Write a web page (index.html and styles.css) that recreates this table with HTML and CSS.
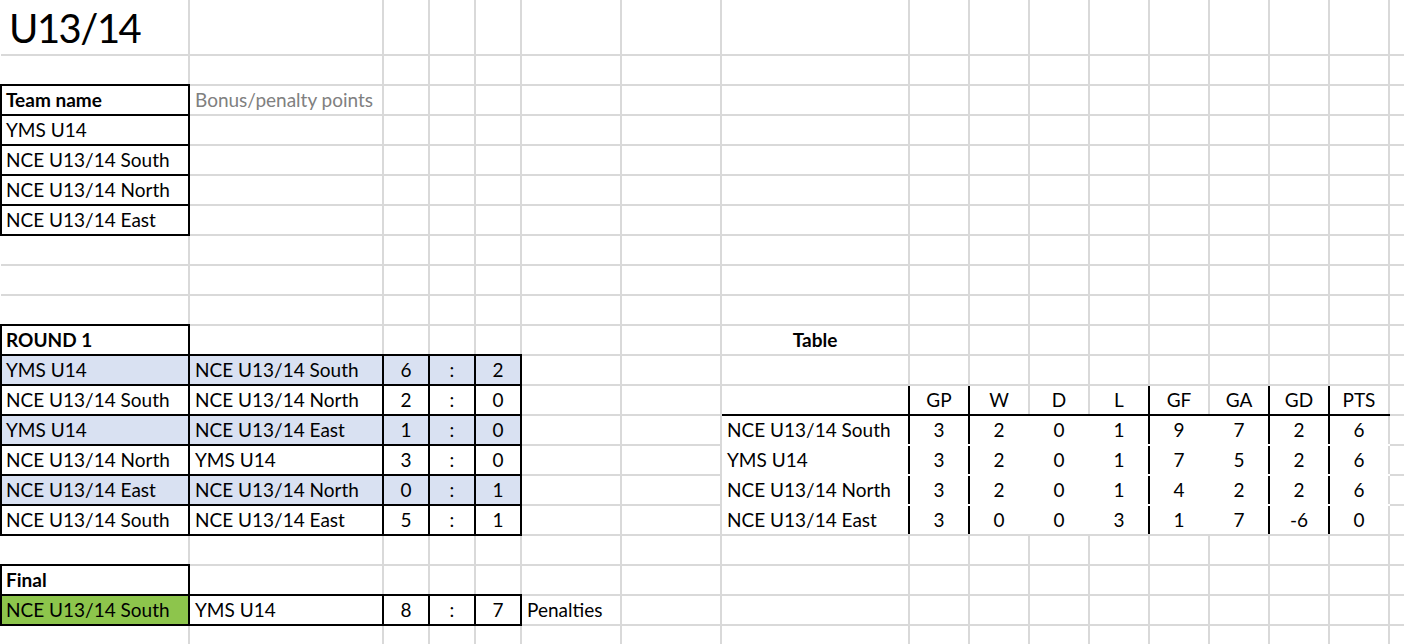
FILE: index.html
```html
<!DOCTYPE html>
<html lang="en">
<head>
<meta charset="utf-8">
<title>U13/14</title>
<link rel="stylesheet" href="styles.css">
</head>
<body>
<table class="sheet">
<colgroup>
<col class="w-a"><col class="w-b"><col class="w-s"><col class="w-s"><col class="w-s"><col class="w-f"><col class="w-f"><col class="w-h">
<col class="w-n"><col class="w-n"><col class="w-n"><col class="w-n"><col class="w-n"><col class="w-n"><col class="w-n"><col class="w-n"><col class="w-n">
</colgroup>
<tbody>
<tr class="row-title"><td class="title">U13/14</td><td></td><td></td><td></td><td></td><td></td><td></td><td></td><td></td><td></td><td></td><td></td><td></td><td></td><td></td><td></td><td></td></tr>
<tr><td class="b"></td><td></td><td></td><td></td><td></td><td></td><td></td><td></td><td></td><td></td><td></td><td></td><td></td><td></td><td></td><td></td><td></td></tr>
<tr><td class="l r b bold">Team name</td><td class="muted">Bonus/penalty points</td><td></td><td></td><td></td><td></td><td></td><td></td><td></td><td></td><td></td><td></td><td></td><td></td><td></td><td></td><td></td></tr>
<tr><td class="l r b">YMS U14</td><td></td><td></td><td></td><td></td><td></td><td></td><td></td><td></td><td></td><td></td><td></td><td></td><td></td><td></td><td></td><td></td></tr>
<tr><td class="l r b">NCE U13/14 South</td><td></td><td></td><td></td><td></td><td></td><td></td><td></td><td></td><td></td><td></td><td></td><td></td><td></td><td></td><td></td><td></td></tr>
<tr><td class="l r b">NCE U13/14 North</td><td></td><td></td><td></td><td></td><td></td><td></td><td></td><td></td><td></td><td></td><td></td><td></td><td></td><td></td><td></td><td></td></tr>
<tr><td class="l r b">NCE U13/14 East</td><td></td><td></td><td></td><td></td><td></td><td></td><td></td><td></td><td></td><td></td><td></td><td></td><td></td><td></td><td></td><td></td></tr>
<tr><td></td><td></td><td></td><td></td><td></td><td></td><td></td><td></td><td></td><td></td><td></td><td></td><td></td><td></td><td></td><td></td><td></td></tr>
<tr><td></td><td></td><td></td><td></td><td></td><td></td><td></td><td></td><td></td><td></td><td></td><td></td><td></td><td></td><td></td><td></td><td></td></tr>
<tr><td class="b"></td><td></td><td></td><td></td><td></td><td></td><td></td><td></td><td></td><td></td><td></td><td></td><td></td><td></td><td></td><td></td><td></td></tr>
<tr><td class="l r b bold">ROUND 1</td><td class="b"></td><td class="b"></td><td class="b"></td><td class="b"></td><td></td><td></td><td class="c bold">Table</td><td></td><td></td><td></td><td></td><td></td><td></td><td></td><td></td><td></td></tr>
<tr class="blue"><td class="l r b">YMS U14</td><td class="r b">NCE U13/14 South</td><td class="r b c">6</td><td class="r b c">:</td><td class="r b c">2</td><td class="plain"></td><td class="plain"></td><td class="plain"></td><td class="plain"></td><td class="plain"></td><td class="plain"></td><td class="plain"></td><td class="plain"></td><td class="plain"></td><td class="plain"></td><td class="plain"></td><td class="plain"></td></tr>
<tr><td class="l r b">NCE U13/14 South</td><td class="r b">NCE U13/14 North</td><td class="r b c">2</td><td class="r b c">:</td><td class="r b c">0</td><td></td><td></td><td class="r b"></td><td class="r b c">GP</td><td class="b c">W</td><td class="b c">D</td><td class="r b c">L</td><td class="b c">GF</td><td class="r b c">GA</td><td class="r b c">GD</td><td class="b c">PTS</td><td></td></tr>
<tr class="blue"><td class="l r b">YMS U14</td><td class="r b">NCE U13/14 East</td><td class="r b c">1</td><td class="r b c">:</td><td class="r b c">0</td><td class="plain"></td><td class="plain"></td><td class="plain r wb">NCE U13/14 South</td><td class="plain r wb c">3</td><td class="plain wr wb c">2</td><td class="plain wr wb c">0</td><td class="plain r wb c">1</td><td class="plain wr wb c">9</td><td class="plain r wb c">7</td><td class="plain r wb c">2</td><td class="plain wb c">6</td><td class="plain"></td></tr>
<tr><td class="l r b">NCE U13/14 North</td><td class="r b">YMS U14</td><td class="r b c">3</td><td class="r b c">:</td><td class="r b c">0</td><td></td><td></td><td class="r wb">YMS U14</td><td class="r wb c">3</td><td class="wr wb c">2</td><td class="wr wb c">0</td><td class="r wb c">1</td><td class="wr wb c">7</td><td class="r wb c">5</td><td class="r wb c">2</td><td class="wb c">6</td><td></td></tr>
<tr class="blue"><td class="l r b">NCE U13/14 East</td><td class="r b">NCE U13/14 North</td><td class="r b c">0</td><td class="r b c">:</td><td class="r b c">1</td><td class="plain"></td><td class="plain"></td><td class="plain r wb">NCE U13/14 North</td><td class="plain r wb c">3</td><td class="plain wr wb c">2</td><td class="plain wr wb c">0</td><td class="plain r wb c">1</td><td class="plain wr wb c">4</td><td class="plain r wb c">2</td><td class="plain r wb c">2</td><td class="plain wb c">6</td><td class="plain"></td></tr>
<tr><td class="l r b">NCE U13/14 South</td><td class="r b">NCE U13/14 East</td><td class="r b c">5</td><td class="r b c">:</td><td class="r b c">1</td><td></td><td></td><td class="r">NCE U13/14 East</td><td class="r c">3</td><td class="wr c">0</td><td class="wr c">0</td><td class="r c">3</td><td class="wr c">1</td><td class="r c">7</td><td class="r c">-6</td><td class="c">0</td><td></td></tr>
<tr><td class="b"></td><td></td><td></td><td></td><td></td><td></td><td></td><td></td><td></td><td></td><td></td><td></td><td></td><td></td><td></td><td></td><td></td></tr>
<tr><td class="l r b bold">Final</td><td class="b"></td><td class="b"></td><td class="b"></td><td class="b"></td><td></td><td></td><td></td><td></td><td></td><td></td><td></td><td></td><td></td><td></td><td></td><td></td></tr>
<tr><td class="l r b green">NCE U13/14 South</td><td class="r b">YMS U14</td><td class="r b c">8</td><td class="r b c">:</td><td class="r b c">7</td><td>Penalties</td><td></td><td></td><td></td><td></td><td></td><td></td><td></td><td></td><td></td><td></td><td></td></tr>
<tr><td></td><td></td><td></td><td></td><td></td><td></td><td></td><td></td><td></td><td></td><td></td><td></td><td></td><td></td><td></td><td></td><td></td></tr>
</tbody>
</table>
</body>
</html>
```

FILE: styles.css
```css
html, body {
  margin: 0;
  padding: 0;
  background: #fff;
  overflow: hidden;
}

.sheet {
  border-collapse: collapse;
  table-layout: fixed;
  width: 1448px;
  font-family: Lato, "Noto Sans", sans-serif;
  font-size: 19px;
  color: #000;
}

.w-a { width: 188px; }
.w-b { width: 194px; }
.w-s { width: 46px; }
.w-f { width: 100px; }
.w-h { width: 188px; }
.w-n { width: 60px; }

.sheet tr { height: 30px; }
.sheet tr.row-title { height: 55px; }

.sheet td {
  border: 2px solid #d9d9d9;
  padding: 0 4px 4px 5px;
  line-height: 20px;
  vertical-align: bottom;
  white-space: nowrap;
  overflow: visible;
}

.sheet tr:first-child td { border-top: none; }
.sheet td:first-child { border-left: none; padding-left: 5px; }

.sheet td.title {
  font-size: 40px;
  line-height: 40px;
  padding-bottom: 6px;
  padding-left: 8px;
  letter-spacing: -1.5px;
}

.sheet td.l { border-left: 2px solid #000; padding-left: 4px; }
.sheet td.r { border-right: 2px solid #000; }
.sheet td.b { border-bottom: 2px solid #000; }
.sheet td.wr { border-right-color: #fff; }
.sheet td.wb { border-bottom-color: #fff; }

.c { text-align: center; }
.sheet td.c { padding-left: 4px; padding-right: 4px; }
.bold { font-weight: 700; }
.muted { color: #808080; }

.blue td { background: #d9e1f2; }
.blue td.plain { background: transparent; }
.sheet td.green { background: #8dc54c; }
```
